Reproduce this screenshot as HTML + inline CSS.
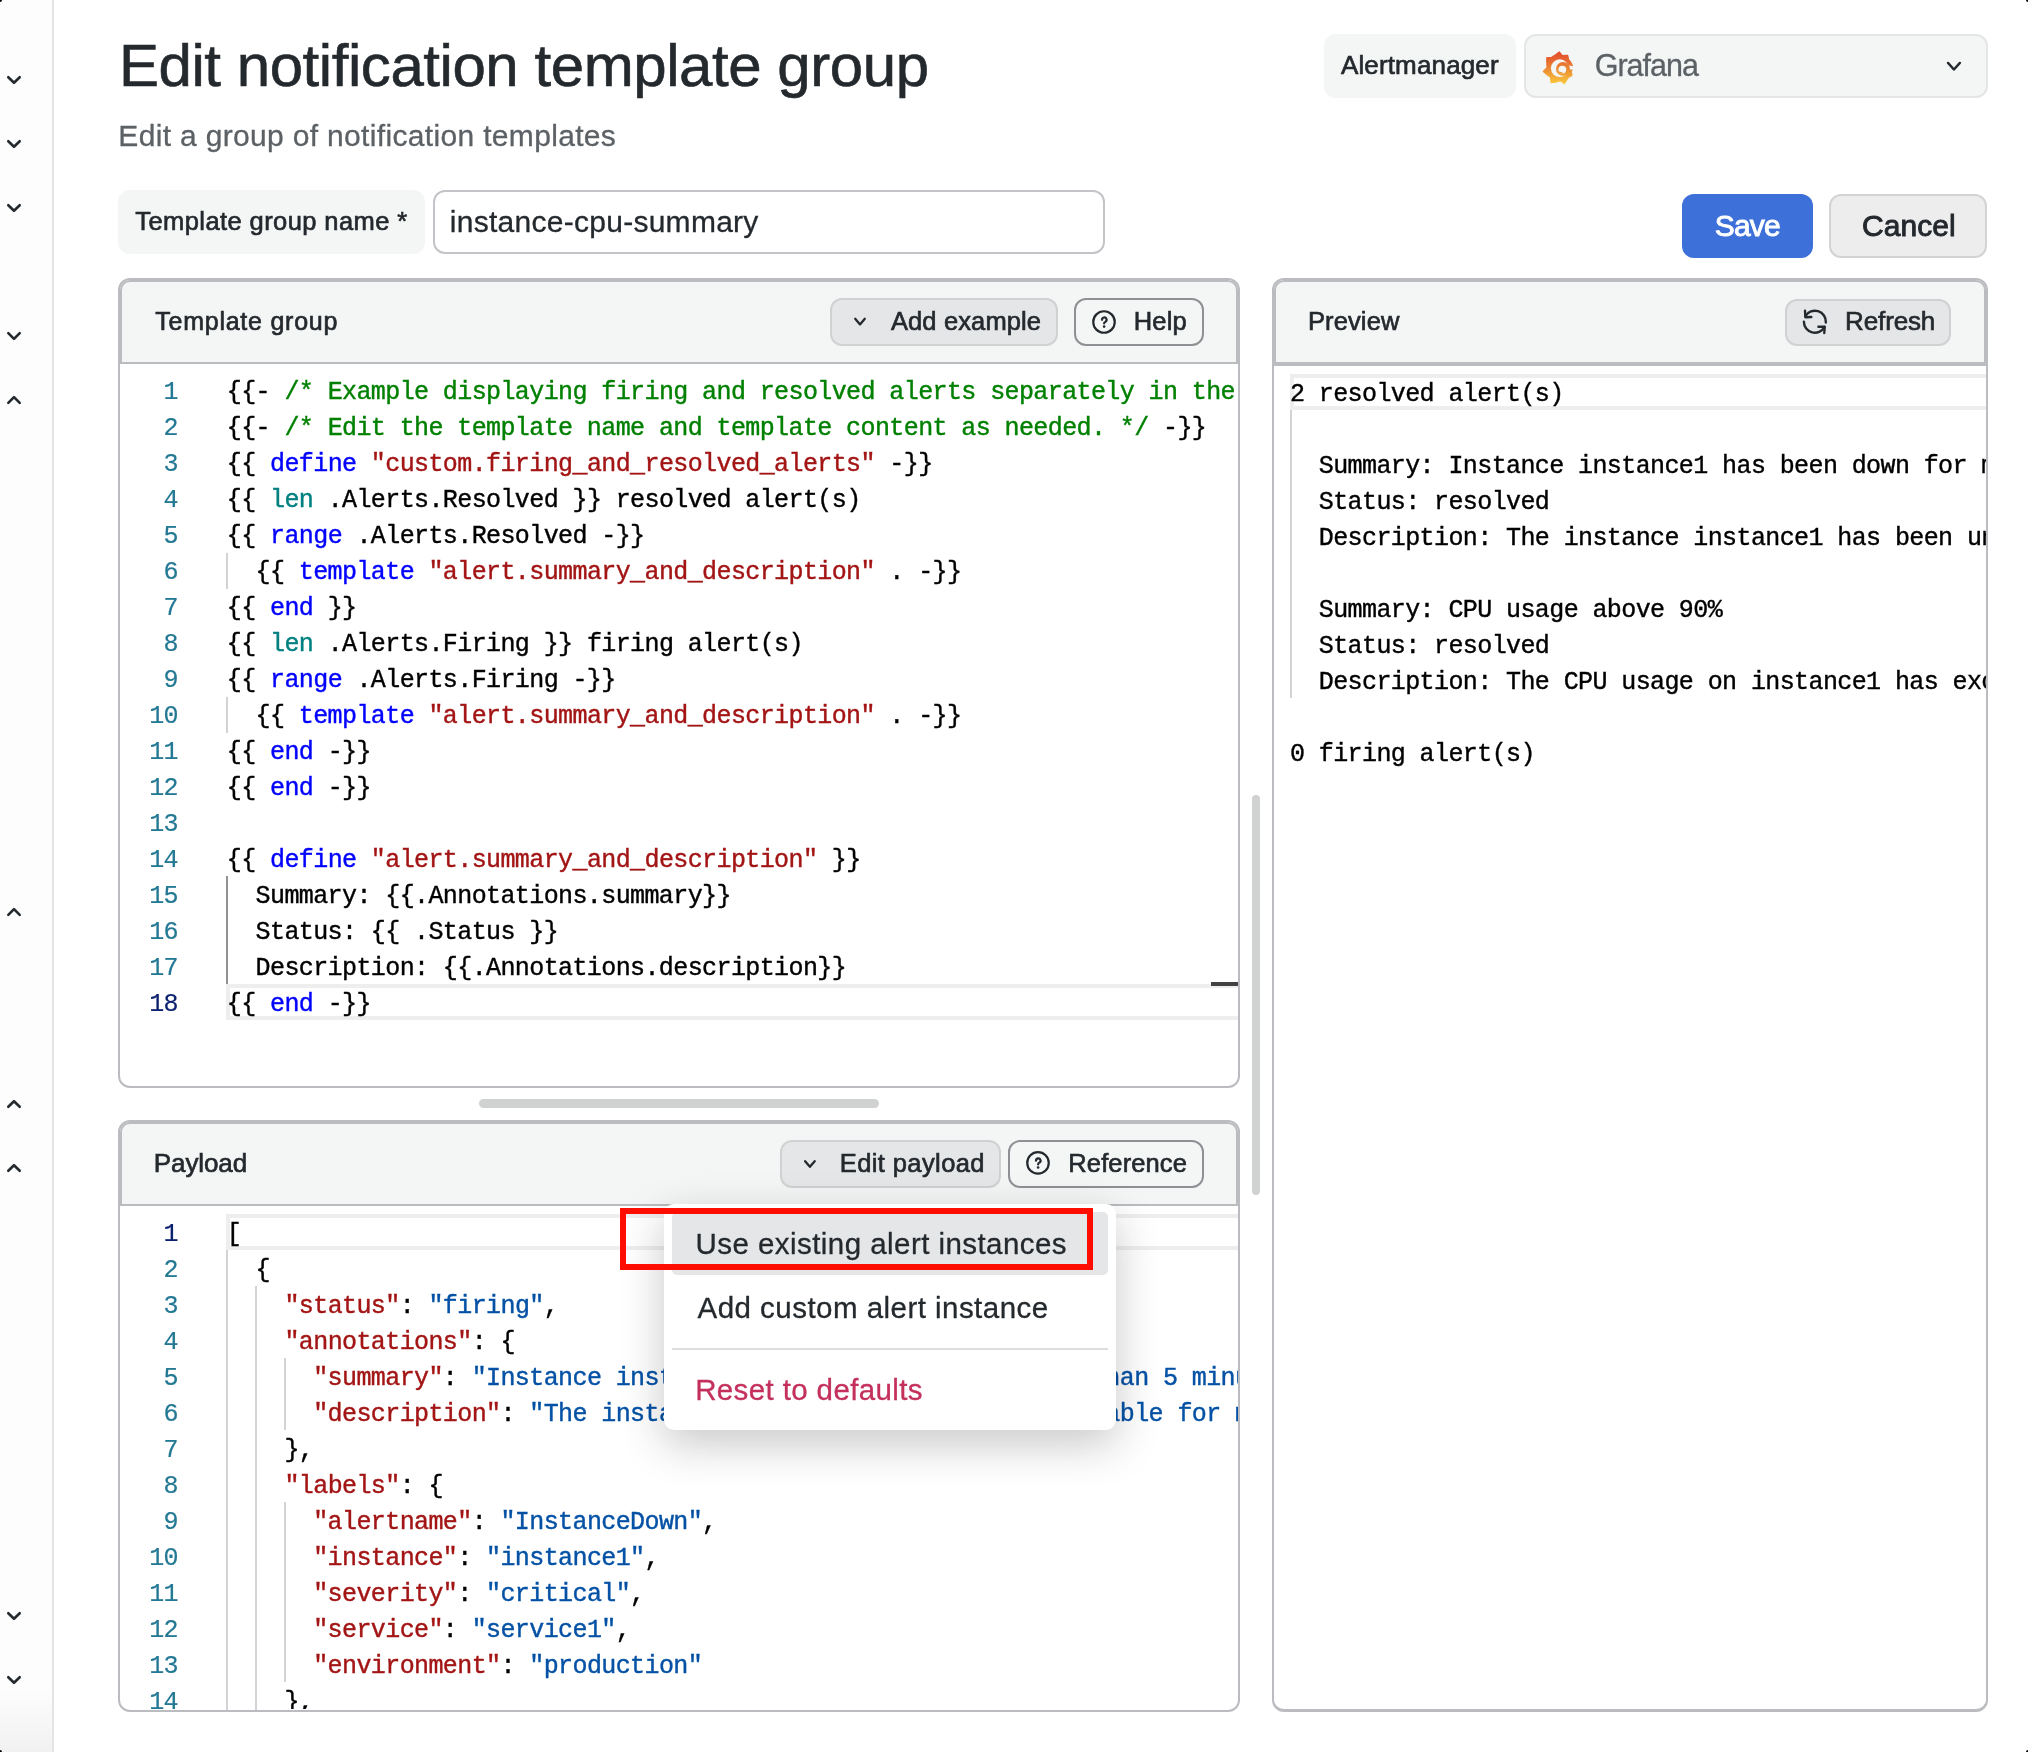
<!DOCTYPE html>
<html><head><meta charset="utf-8"><title>Edit notification template group</title>
<style>
*{box-sizing:border-box;margin:0;padding:0}
html,body{width:2028px;height:1752px;overflow:hidden;background:#fff}
body{position:relative;font-family:"Liberation Sans",sans-serif;color:#24292e}
.a{position:absolute}
svg.layer{position:absolute;left:0;top:0;width:2028px;height:1752px;overflow:visible;will-change:transform}
svg text{font-family:"Liberation Sans",sans-serif;white-space:pre}
svg g.mono text{font-family:"Liberation Mono",monospace;font-size:25px;letter-spacing:-0.6px;stroke:currentColor;stroke-width:0.4px}
</style></head><body>
<div class="a" style="left:0;top:0;width:52px;height:1752px;background:linear-gradient(to bottom,#fdfdfd 0,#fdfdfd 1690px,#f1f1f2 1752px)"></div>
<div class="a" style="left:52px;top:0;width:2px;height:1752px;background:#e3e4e6"></div>

<div class="a" style="left:1324px;top:34px;width:192px;height:64px;background:#f4f5f5;border-radius:12px"></div>
<div class="a" style="left:1524px;top:34px;width:464px;height:64px;background:#f4f5f5;border:2px solid #e4e5e6;border-radius:12px"></div>

<div class="a" style="left:118px;top:190px;width:307px;height:64px;background:#f4f5f5;border-radius:12px"></div>
<div class="a" style="left:433px;top:190px;width:672px;height:64px;background:#fff;border:2px solid #c3c4c7;border-radius:12px"></div>

<div class="a" style="left:1682px;top:194px;width:131px;height:64px;background:#3d71d9;border-radius:12px"></div>
<div class="a" style="left:1829px;top:194px;width:158px;height:64px;background:#ededee;border:2px solid #d2d3d5;border-radius:12px"></div>

<!-- template panel -->
<div class="a" style="left:118px;top:278px;width:1122px;height:810px;border:2px solid #bbbcbf;border-radius:12px;background:#fff"></div>
<div class="a" style="left:120px;top:280px;width:1118px;height:84px;border:2px solid #bbbcbf;border-radius:10px 10px 0 0;background:#f4f5f5"></div>
<div class="a" style="left:830px;top:298px;width:228px;height:48px;background:#e5e6e7;border:2px solid #d0d1d3;border-radius:12px"></div>
<div class="a" style="left:1074px;top:298px;width:130px;height:48px;border:2px solid #8e9094;border-radius:12px"></div>
<div class="a" style="left:226px;top:984px;width:1012px;height:36px;border:4px solid #eeeeee;border-right:none"></div>
<div class="a" style="left:1211px;top:982px;width:27px;height:4px;background:#424242"></div>
<div class="a" style="left:226px;top:553px;width:2px;height:36px;background:#d3d3d3"></div>
<div class="a" style="left:226px;top:697px;width:2px;height:36px;background:#d3d3d3"></div>
<div class="a" style="left:226px;top:876px;width:2px;height:108px;background:#939393"></div>

<!-- scrollbars -->
<div class="a" style="left:479px;top:1099px;width:400px;height:9px;border-radius:4.5px;background:#d0d1d1"></div>
<div class="a" style="left:1252px;top:795px;width:8px;height:400px;border-radius:4px;background:#d0d1d1"></div>

<!-- payload panel -->
<div class="a" style="left:118px;top:1120px;width:1122px;height:592px;border:2px solid #bbbcbf;border-radius:12px;background:#fff"></div>
<div class="a" style="left:120px;top:1122px;width:1118px;height:84px;border:2px solid #bbbcbf;border-radius:10px 10px 0 0;background:#f4f5f5"></div>
<div class="a" style="left:780px;top:1140px;width:221px;height:48px;background:#e5e6e7;border:2px solid #d0d1d3;border-radius:12px"></div>
<div class="a" style="left:1008px;top:1140px;width:196px;height:48px;border:2px solid #8e9094;border-radius:12px"></div>
<div class="a" style="left:226px;top:1214px;width:1012px;height:36px;border:4px solid #eeeeee;border-right:none"></div>
<div class="a" style="left:226px;top:1250px;width:2px;height:460px;background:#d3d3d3"></div>
<div class="a" style="left:255px;top:1286px;width:2px;height:424px;background:#d3d3d3"></div>
<div class="a" style="left:284px;top:1358px;width:2px;height:72px;background:#d3d3d3"></div>
<div class="a" style="left:284px;top:1502px;width:2px;height:180px;background:#d3d3d3"></div>

<!-- preview panel -->
<div class="a" style="left:1272px;top:278px;width:716px;height:1434px;border:2px solid #bbbcbf;border-bottom-width:3px;border-radius:12px;background:#fff"></div>
<div class="a" style="left:1274px;top:280px;width:712px;height:86px;border:2px solid #bbbcbf;border-bottom-width:4px;border-radius:10px 10px 0 0;background:#f4f5f5"></div>
<div class="a" style="left:1785px;top:299px;width:166px;height:47px;background:#e5e6e7;border:2px solid #d0d1d3;border-radius:12px"></div>
<div class="a" style="left:1290px;top:374px;width:696px;height:36px;border:4px solid #eeeeee;border-right:none"></div>
<div class="a" style="left:1290px;top:410px;width:2px;height:288px;background:#d3d3d3"></div>

<svg class="layer" viewBox="0 0 2028 1752">
<defs>
<clipPath id="clipT"><rect x="122" y="364" width="1116" height="722"/></clipPath>
<clipPath id="clipP"><rect x="122" y="1206" width="1116" height="503"/></clipPath>
<clipPath id="clipV"><rect x="1276" y="366" width="710" height="1343"/></clipPath>
</defs>
<path d="M8.3 77.2 L14.0 82.8 L19.7 77.2" fill="none" stroke="#24292e" stroke-width="2.6" stroke-linecap="round" stroke-linejoin="round"/>
<path d="M8.3 141.2 L14.0 146.8 L19.7 141.2" fill="none" stroke="#24292e" stroke-width="2.6" stroke-linecap="round" stroke-linejoin="round"/>
<path d="M8.3 205.2 L14.0 210.8 L19.7 205.2" fill="none" stroke="#24292e" stroke-width="2.6" stroke-linecap="round" stroke-linejoin="round"/>
<path d="M8.3 333.1 L14.0 338.9 L19.7 333.1" fill="none" stroke="#24292e" stroke-width="2.6" stroke-linecap="round" stroke-linejoin="round"/>
<path d="M8.3 1613.2 L14.0 1618.8 L19.7 1613.2" fill="none" stroke="#24292e" stroke-width="2.6" stroke-linecap="round" stroke-linejoin="round"/>
<path d="M8.3 1677.2 L14.0 1682.8 L19.7 1677.2" fill="none" stroke="#24292e" stroke-width="2.6" stroke-linecap="round" stroke-linejoin="round"/>
<path d="M8.3 402.9 L14.0 397.1 L19.7 402.9" fill="none" stroke="#24292e" stroke-width="2.6" stroke-linecap="round" stroke-linejoin="round"/>
<path d="M8.3 914.9 L14.0 909.1 L19.7 914.9" fill="none" stroke="#24292e" stroke-width="2.6" stroke-linecap="round" stroke-linejoin="round"/>
<path d="M8.3 1106.8 L14.0 1101.2 L19.7 1106.8" fill="none" stroke="#24292e" stroke-width="2.6" stroke-linecap="round" stroke-linejoin="round"/>
<path d="M8.3 1170.8 L14.0 1165.2 L19.7 1170.8" fill="none" stroke="#24292e" stroke-width="2.6" stroke-linecap="round" stroke-linejoin="round"/>
<text x="118.9" y="85.7" fill="#24292e" stroke="#24292e" stroke-width="0.6" style="font-size:60.0px;letter-spacing:-0.441px;">Edit notification template group</text><text x="118.35" y="145.8" fill="#5c6166" stroke="#5c6166" stroke-width="0.3" style="font-size:30.0px;letter-spacing:0.33px;">Edit a group of notification templates</text><text x="135.32" y="230.2" fill="#24292e" stroke="#24292e" stroke-width="0.65" style="font-size:25.5px;letter-spacing:0.411px;">Template group name *</text><text x="449.85" y="231.5" fill="#24292e" stroke="#24292e" stroke-width="0.3" style="font-size:30.0px;letter-spacing:0.267px;">instance-cpu-summary</text><text x="1340.92" y="73.9" fill="#24292e" stroke="#24292e" stroke-width="0.65" style="font-size:26.0px;letter-spacing:0.148px;">Alertmanager</text><text x="1594.75" y="76.1" fill="#5c6166" stroke="#5c6166" stroke-width="0.3" style="font-size:30.5px;letter-spacing:-1.007px;">Grafana</text><text x="1714.75" y="236.2" fill="#ffffff" stroke="#ffffff" stroke-width="0.9" style="font-size:30.0px;letter-spacing:-0.831px;">Save</text><text x="1861.95" y="236.2" fill="#24292e" stroke="#24292e" stroke-width="0.9" style="font-size:30.0px;letter-spacing:0.076px;">Cancel</text><text x="155.22" y="329.6" fill="#24292e" stroke="#24292e" stroke-width="0.65" style="font-size:25.0px;letter-spacing:0.756px;">Template group</text><text x="890.93" y="329.9" fill="#24292e" stroke="#24292e" stroke-width="0.65" style="font-size:25.5px;letter-spacing:0.129px;">Add example</text><text x="1133.83" y="329.9" fill="#24292e" stroke="#24292e" stroke-width="0.65" style="font-size:25.5px;letter-spacing:0.129px;">Help</text><text x="1307.92" y="329.8" fill="#24292e" stroke="#24292e" stroke-width="0.65" style="font-size:25.5px;letter-spacing:0.128px;">Preview</text><text x="1845.12" y="330" fill="#24292e" stroke="#24292e" stroke-width="0.65" style="font-size:26.0px;letter-spacing:-0.138px;">Refresh</text><text x="153.82" y="1171.9" fill="#24292e" stroke="#24292e" stroke-width="0.65" style="font-size:26.0px;letter-spacing:-0.108px;">Payload</text><text x="839.83" y="1172.1" fill="#24292e" stroke="#24292e" stroke-width="0.65" style="font-size:25.5px;letter-spacing:0.389px;">Edit payload</text><text x="1068.33" y="1172.1" fill="#24292e" stroke="#24292e" stroke-width="0.65" style="font-size:25.5px;letter-spacing:0.11px;">Reference</text>
<g transform="translate(1538.0 48.0)"><defs><linearGradient id="glg" gradientUnits="userSpaceOnUse" x1="0" y1="5" x2="0" y2="36"><stop offset="0.05" stop-color="#e4512d"/><stop offset="0.55" stop-color="#ec8f36"/><stop offset="1" stop-color="#f8c93a"/></linearGradient></defs><path d="M21.3 4 L24.3 7.6 L29.7 7.3 L30.6 11.6 C33 14 34.5 17 34.7 19.5 L33.2 23.5 L34 27.4 L30.2 29.6 L26.3 35.6 L22.2 32.6 L17.6 34.2 L13 34.7 L12.6 29.2 L8.6 26.4 L5.3 23.5 L9 19.6 L8.8 14.6 L8.7 9.8 L13.6 9.3 L17.7 6.8 Z" fill="url(#glg)" stroke="url(#glg)" stroke-width="1.2" stroke-linejoin="round"/><circle cx="21.8" cy="20.2" r="8.9" fill="#f4f5f5"/><path d="M30 17.6 L36 18.2 L36 21.4 L30 21.4 Z" fill="#f4f5f5"/><circle cx="25.0" cy="20.9" r="7.0" fill="url(#glg)"/><circle cx="24.3" cy="21.6" r="3.9" fill="#f4f5f5"/><path d="M20.4 23.2 C21 25.5 23 25.8 24.8 25.6 L24.6 24.6 Z" fill="url(#glg)"/></g><path d="M1948.0 62.9 L1953.9 69.5 L1959.9 62.9" fill="none" stroke="#24292e" stroke-width="2.4" stroke-linecap="round" stroke-linejoin="round"/><path d="M855.2 318.8 L860.0 324.4 L864.8 318.8" fill="none" stroke="#24292e" stroke-width="2.3" stroke-linecap="round" stroke-linejoin="round"/><path d="M805.1 1161.2 L809.9 1166.8 L814.7 1161.2" fill="none" stroke="#24292e" stroke-width="2.3" stroke-linecap="round" stroke-linejoin="round"/><circle cx="1104.0" cy="322.0" r="10.75" fill="none" stroke="#24292e" stroke-width="2.2"/><path d="M1102.00 319.80 A2.3 2.3 0 1 1 1105.50 321.70 Q1104.10 322.30 1104.10 323.50" fill="none" stroke="#24292e" stroke-width="2.2" stroke-linecap="round" stroke-linejoin="round"/><circle cx="1104.1" cy="326.6" r="1.3" fill="#24292e"/><circle cx="1038.0" cy="1162.9" r="10.75" fill="none" stroke="#24292e" stroke-width="2.2"/><path d="M1036.00 1160.70 A2.3 2.3 0 1 1 1039.50 1162.60 Q1038.10 1163.20 1038.10 1164.40" fill="none" stroke="#24292e" stroke-width="2.2" stroke-linecap="round" stroke-linejoin="round"/><circle cx="1038.1" cy="1167.5" r="1.3" fill="#24292e"/><path d="M1805.37 316.20 A11.0 11.0 0 0 1 1825.87 322.47" fill="none" stroke="#24292e" stroke-width="2.4" stroke-linecap="round"/><path d="M1803.90 321.70 A11.0 11.0 0 0 0 1824.52 327.03" fill="none" stroke="#24292e" stroke-width="2.4" stroke-linecap="round"/><path d="M1805.0 310.6 L1805.4 317.3 L1811.3 317.0" fill="none" stroke="#24292e" stroke-width="2.4" stroke-linecap="round" stroke-linejoin="round"/><path d="M1818.4 326.8 L1824.7 326.8 L1824.3 333.0" fill="none" stroke="#24292e" stroke-width="2.4" stroke-linecap="round" stroke-linejoin="round"/>
<g class="mono" clip-path="url(#clipT)">
<text x="178" y="399" text-anchor="end" fill="#237893" style="color:#237893;stroke-width:0.2px">1</text>
<text x="226.8" y="399" fill="#000" style="color:#000">{{- <tspan fill="#008000" style="color:#008000">/* Example displaying firing and resolved alerts separately in the notification. */</tspan> -}}</text>
<text x="178" y="435" text-anchor="end" fill="#237893" style="color:#237893;stroke-width:0.2px">2</text>
<text x="226.8" y="435" fill="#000" style="color:#000">{{- <tspan fill="#008000" style="color:#008000">/* Edit the template name and template content as needed. */</tspan> -}}</text>
<text x="178" y="471" text-anchor="end" fill="#237893" style="color:#237893;stroke-width:0.2px">3</text>
<text x="226.8" y="471" fill="#000" style="color:#000">{{ <tspan fill="#0000ff" style="color:#0000ff">define</tspan> <tspan fill="#a31515" style="color:#a31515">"custom.firing_and_resolved_alerts"</tspan> -}}</text>
<text x="178" y="507" text-anchor="end" fill="#237893" style="color:#237893;stroke-width:0.2px">4</text>
<text x="226.8" y="507" fill="#000" style="color:#000">{{ <tspan fill="#008080" style="color:#008080">len</tspan> .Alerts.Resolved }} resolved alert(s)</text>
<text x="178" y="543" text-anchor="end" fill="#237893" style="color:#237893;stroke-width:0.2px">5</text>
<text x="226.8" y="543" fill="#000" style="color:#000">{{ <tspan fill="#0000ff" style="color:#0000ff">range</tspan> .Alerts.Resolved -}}</text>
<text x="178" y="579" text-anchor="end" fill="#237893" style="color:#237893;stroke-width:0.2px">6</text>
<text x="226.8" y="579" fill="#000" style="color:#000">  {{ <tspan fill="#0000ff" style="color:#0000ff">template</tspan> <tspan fill="#a31515" style="color:#a31515">"alert.summary_and_description"</tspan> . -}}</text>
<text x="178" y="615" text-anchor="end" fill="#237893" style="color:#237893;stroke-width:0.2px">7</text>
<text x="226.8" y="615" fill="#000" style="color:#000">{{ <tspan fill="#0000ff" style="color:#0000ff">end</tspan> }}</text>
<text x="178" y="651" text-anchor="end" fill="#237893" style="color:#237893;stroke-width:0.2px">8</text>
<text x="226.8" y="651" fill="#000" style="color:#000">{{ <tspan fill="#008080" style="color:#008080">len</tspan> .Alerts.Firing }} firing alert(s)</text>
<text x="178" y="687" text-anchor="end" fill="#237893" style="color:#237893;stroke-width:0.2px">9</text>
<text x="226.8" y="687" fill="#000" style="color:#000">{{ <tspan fill="#0000ff" style="color:#0000ff">range</tspan> .Alerts.Firing -}}</text>
<text x="178" y="723" text-anchor="end" fill="#237893" style="color:#237893;stroke-width:0.2px">10</text>
<text x="226.8" y="723" fill="#000" style="color:#000">  {{ <tspan fill="#0000ff" style="color:#0000ff">template</tspan> <tspan fill="#a31515" style="color:#a31515">"alert.summary_and_description"</tspan> . -}}</text>
<text x="178" y="759" text-anchor="end" fill="#237893" style="color:#237893;stroke-width:0.2px">11</text>
<text x="226.8" y="759" fill="#000" style="color:#000">{{ <tspan fill="#0000ff" style="color:#0000ff">end</tspan> -}}</text>
<text x="178" y="795" text-anchor="end" fill="#237893" style="color:#237893;stroke-width:0.2px">12</text>
<text x="226.8" y="795" fill="#000" style="color:#000">{{ <tspan fill="#0000ff" style="color:#0000ff">end</tspan> -}}</text>
<text x="178" y="831" text-anchor="end" fill="#237893" style="color:#237893;stroke-width:0.2px">13</text>
<text x="178" y="867" text-anchor="end" fill="#237893" style="color:#237893;stroke-width:0.2px">14</text>
<text x="226.8" y="867" fill="#000" style="color:#000">{{ <tspan fill="#0000ff" style="color:#0000ff">define</tspan> <tspan fill="#a31515" style="color:#a31515">"alert.summary_and_description"</tspan> }}</text>
<text x="178" y="903" text-anchor="end" fill="#237893" style="color:#237893;stroke-width:0.2px">15</text>
<text x="226.8" y="903" fill="#000" style="color:#000">  Summary: {{.Annotations.summary}}</text>
<text x="178" y="939" text-anchor="end" fill="#237893" style="color:#237893;stroke-width:0.2px">16</text>
<text x="226.8" y="939" fill="#000" style="color:#000">  Status: {{ .Status }}</text>
<text x="178" y="975" text-anchor="end" fill="#237893" style="color:#237893;stroke-width:0.2px">17</text>
<text x="226.8" y="975" fill="#000" style="color:#000">  Description: {{.Annotations.description}}</text>
<text x="178" y="1011" text-anchor="end" fill="#0b216f" style="color:#0b216f;stroke-width:0.2px">18</text>
<text x="226.8" y="1011" fill="#000" style="color:#000">{{ <tspan fill="#0000ff" style="color:#0000ff">end</tspan> -}}</text>
</g>
<g class="mono" clip-path="url(#clipP)">
<text x="178" y="1241" text-anchor="end" fill="#0b216f" style="color:#0b216f;stroke-width:0.2px">1</text>
<text x="226.8" y="1241" fill="#000" style="color:#000">[</text>
<text x="178" y="1277" text-anchor="end" fill="#237893" style="color:#237893;stroke-width:0.2px">2</text>
<text x="226.8" y="1277" fill="#000" style="color:#000">  {</text>
<text x="178" y="1313" text-anchor="end" fill="#237893" style="color:#237893;stroke-width:0.2px">3</text>
<text x="226.8" y="1313" fill="#000" style="color:#000">    <tspan fill="#a31515" style="color:#a31515">"status"</tspan>: <tspan fill="#0451a5" style="color:#0451a5">"firing"</tspan>,</text>
<text x="178" y="1349" text-anchor="end" fill="#237893" style="color:#237893;stroke-width:0.2px">4</text>
<text x="226.8" y="1349" fill="#000" style="color:#000">    <tspan fill="#a31515" style="color:#a31515">"annotations"</tspan>: {</text>
<text x="178" y="1385" text-anchor="end" fill="#237893" style="color:#237893;stroke-width:0.2px">5</text>
<text x="226.8" y="1385" fill="#000" style="color:#000">      <tspan fill="#a31515" style="color:#a31515">"summary"</tspan>: <tspan fill="#0451a5" style="color:#0451a5">"Instance instance1 has been down for more than 5 minutes"</tspan>,</text>
<text x="178" y="1421" text-anchor="end" fill="#237893" style="color:#237893;stroke-width:0.2px">6</text>
<text x="226.8" y="1421" fill="#000" style="color:#000">      <tspan fill="#a31515" style="color:#a31515">"description"</tspan>: <tspan fill="#0451a5" style="color:#0451a5">"The instance instance1 has been unreachable for more than 5 minutes."</tspan></text>
<text x="178" y="1457" text-anchor="end" fill="#237893" style="color:#237893;stroke-width:0.2px">7</text>
<text x="226.8" y="1457" fill="#000" style="color:#000">    },</text>
<text x="178" y="1493" text-anchor="end" fill="#237893" style="color:#237893;stroke-width:0.2px">8</text>
<text x="226.8" y="1493" fill="#000" style="color:#000">    <tspan fill="#a31515" style="color:#a31515">"labels"</tspan>: {</text>
<text x="178" y="1529" text-anchor="end" fill="#237893" style="color:#237893;stroke-width:0.2px">9</text>
<text x="226.8" y="1529" fill="#000" style="color:#000">      <tspan fill="#a31515" style="color:#a31515">"alertname"</tspan>: <tspan fill="#0451a5" style="color:#0451a5">"InstanceDown"</tspan>,</text>
<text x="178" y="1565" text-anchor="end" fill="#237893" style="color:#237893;stroke-width:0.2px">10</text>
<text x="226.8" y="1565" fill="#000" style="color:#000">      <tspan fill="#a31515" style="color:#a31515">"instance"</tspan>: <tspan fill="#0451a5" style="color:#0451a5">"instance1"</tspan>,</text>
<text x="178" y="1601" text-anchor="end" fill="#237893" style="color:#237893;stroke-width:0.2px">11</text>
<text x="226.8" y="1601" fill="#000" style="color:#000">      <tspan fill="#a31515" style="color:#a31515">"severity"</tspan>: <tspan fill="#0451a5" style="color:#0451a5">"critical"</tspan>,</text>
<text x="178" y="1637" text-anchor="end" fill="#237893" style="color:#237893;stroke-width:0.2px">12</text>
<text x="226.8" y="1637" fill="#000" style="color:#000">      <tspan fill="#a31515" style="color:#a31515">"service"</tspan>: <tspan fill="#0451a5" style="color:#0451a5">"service1"</tspan>,</text>
<text x="178" y="1673" text-anchor="end" fill="#237893" style="color:#237893;stroke-width:0.2px">13</text>
<text x="226.8" y="1673" fill="#000" style="color:#000">      <tspan fill="#a31515" style="color:#a31515">"environment"</tspan>: <tspan fill="#0451a5" style="color:#0451a5">"production"</tspan></text>
<text x="178" y="1709" text-anchor="end" fill="#237893" style="color:#237893;stroke-width:0.2px">14</text>
<text x="226.8" y="1709" fill="#000" style="color:#000">    },</text>
</g>
<g class="mono" clip-path="url(#clipV)">
<text x="1290" y="401" fill="#000" style="color:#000">2 resolved alert(s)</text>
<text x="1290" y="473" fill="#000" style="color:#000">  Summary: Instance instance1 has been down for more than 5 minutes</text>
<text x="1290" y="509" fill="#000" style="color:#000">  Status: resolved</text>
<text x="1290" y="545" fill="#000" style="color:#000">  Description: The instance instance1 has been unreachable for more than 5 minutes.</text>
<text x="1290" y="617" fill="#000" style="color:#000">  Summary: CPU usage above 90%</text>
<text x="1290" y="653" fill="#000" style="color:#000">  Status: resolved</text>
<text x="1290" y="689" fill="#000" style="color:#000">  Description: The CPU usage on instance1 has exceeded 90% for more than 10 minutes.</text>
<text x="1290" y="761" fill="#000" style="color:#000">0 firing alert(s)</text>
</g>
</svg>

<!-- dropdown menu -->
<div class="a" style="left:664px;top:1204px;width:452px;height:226px;background:#fff;border-radius:10px;box-shadow:0 14px 44px rgba(24,26,27,0.24)"></div>
<div class="a" style="left:672px;top:1212px;width:436px;height:63px;background:#e5e6e7;border-radius:5px"></div>
<div class="a" style="left:672px;top:1348px;width:436px;height:2px;background:#dcdddf"></div>
<svg class="layer" viewBox="0 0 2028 1752">
<text x="695.55" y="1254" fill="#24292e" stroke="#24292e" stroke-width="0.3" style="font-size:29.5px;letter-spacing:0.443px;">Use existing alert instances</text><text x="697.55" y="1318" fill="#24292e" stroke="#24292e" stroke-width="0.3" style="font-size:29.5px;letter-spacing:0.466px;">Add custom alert instance</text><text x="695.15" y="1399.6" fill="#c4305c" stroke="#c4305c" stroke-width="0.3" style="font-size:29.5px;letter-spacing:0.379px;">Reset to defaults</text>
</svg>
<div class="a" style="left:620px;top:1208px;width:473px;height:62px;border:6px solid #ff0d00"></div>
<div class="a" style="left:0;top:0;width:2px;height:2px;background:#000;border-bottom-right-radius:2px"></div>
<div class="a" style="left:2026px;top:0;width:2px;height:2px;background:#000;border-bottom-left-radius:2px"></div>
<div class="a" style="left:0;top:1750px;width:2px;height:2px;background:#000;border-top-right-radius:2px"></div>
<div class="a" style="left:2026px;top:1750px;width:2px;height:2px;background:#000;border-top-left-radius:2px"></div>
</body></html>
